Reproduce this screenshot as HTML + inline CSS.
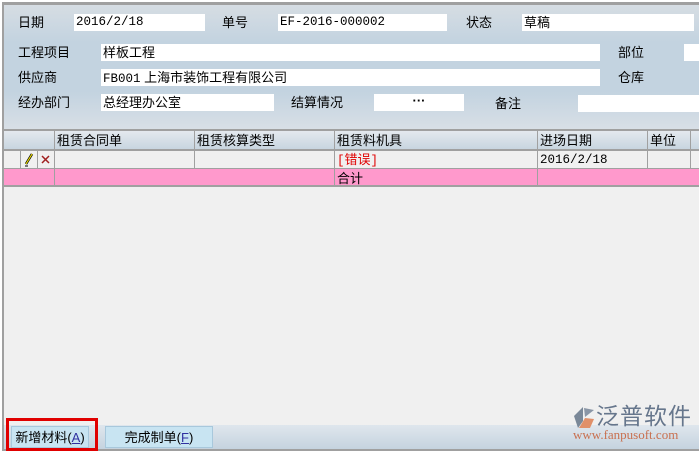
<!DOCTYPE html>
<html><head><meta charset="utf-8"><style>
*{margin:0;padding:0;box-sizing:border-box}
body{width:699px;height:453px;overflow:hidden;background:#fff;font-family:"Liberation Sans","Noto Sans CJK SC",sans-serif;font-size:13px;color:#000;position:relative}
.a{position:absolute}
#frame{left:2px;top:2px;width:697px;height:449px;border-top:3px solid #a0a0a0;border-left:2px solid #a0a0a0;border-bottom:2px solid #a0a0a0;background:#f0f0f0}
#form{left:4px;top:5px;width:695px;height:124px;background:linear-gradient(#d6dde3,#c3d3e0 30%,#c3d3e0 70%,#d8dfe6)}
.l{position:absolute;font-size:13px;line-height:17px}
.i{position:absolute;background:#fff;height:17px;line-height:17px;padding-left:2px;font-size:13px}
.m{font-family:"Liberation Mono","Noto Sans CJK SC",monospace;font-size:12.5px}
.h{position:absolute;top:129px;height:22px;background:linear-gradient(#e4e9ee,#c8d5e0);border-top:2px solid #a0a0a0;border-bottom:2px solid #a0a0a0;line-height:19px}
.v{position:absolute;border-left:1px solid #a0a0a0}
.hl{border-bottom:1px solid #a0a0a0}
</style></head><body>
<div class="a" id="frame"></div>
<div class="a" id="form"></div>
<div class="l" style="left:18px;top:14px">日期</div>
<div class="i m" style="left:74px;top:14px;width:131px">2016/2/18</div>
<div class="l" style="left:222px;top:14px">单号</div>
<div class="i m" style="left:278px;top:14px;width:169px">EF-2016-000002</div>
<div class="l" style="left:466px;top:14px">状态</div>
<div class="i" style="left:522px;top:14px;width:172px">草稿</div>
<div class="l" style="left:18px;top:44px">工程项目</div>
<div class="i" style="left:101px;top:44px;width:499px">样板工程</div>
<div class="l" style="left:618px;top:44px">部位</div>
<div class="i" style="left:684px;top:44px;width:15px"></div>
<div class="l" style="left:18px;top:69px">供应商</div>
<div class="i" style="left:101px;top:69px;width:499px"><span class="m">FB001</span> 上海市装饰工程有限公司</div>
<div class="l" style="left:618px;top:69px">仓库</div>
<div class="l" style="left:18px;top:94px">经办部门</div>
<div class="i" style="left:101px;top:94px;width:173px">总经理办公室</div>
<div class="l" style="left:291px;top:94px">结算情况</div>
<div class="i" style="left:374px;top:94px;width:90px;text-align:center;padding:0;font-weight:bold;line-height:14px">···</div>
<div class="l" style="left:495px;top:95px">备注</div>
<div class="i" style="left:578px;top:95px;width:121px"></div>

<div class="h" style="left:4px;width:695px"></div>
<div class="l" style="left:57px;top:132px">租赁合同单</div>
<div class="l" style="left:197px;top:132px">租赁核算类型</div>
<div class="l" style="left:337px;top:132px">租赁料机具</div>
<div class="l" style="left:540px;top:132px">进场日期</div>
<div class="l" style="left:650px;top:132px">单位</div>
<div class="a hl" style="left:4px;top:151px;width:695px;height:18px;background:#f0f0f0"></div>
<div class="a hl" style="left:4px;top:169px;width:695px;height:18px;background:#ff99cc;border-bottom:2px solid #a0a0a0"></div>
<div class="v" style="left:20px;top:151px;height:18px"></div>
<div class="v" style="left:37px;top:151px;height:18px"></div>
<div class="v" style="left:54px;top:131px;height:56px"></div>
<div class="v" style="left:194px;top:131px;height:38px"></div>
<div class="v" style="left:334px;top:131px;height:56px"></div>
<div class="v" style="left:537px;top:131px;height:56px"></div>
<div class="v" style="left:647px;top:131px;height:38px"></div>
<div class="v" style="left:690px;top:131px;height:38px"></div>
<svg class="a" style="left:23px;top:153px" width="12" height="14"><path d="M9 1 L3 11" stroke="#000" stroke-width="2.5"/><path d="M9 1 L3 11" stroke="#f0e000" stroke-width="1.2"/><path d="M2 13 L5 13" stroke="#000"/></svg>
<svg class="a" style="left:40px;top:154px" width="11" height="11"><path d="M2 2 L9 9 M9 2 L2 9" stroke="#a02020" stroke-width="1.5"/></svg>
<div class="l" style="left:337px;top:151px;color:#e00000"><span class="m">[</span>错误<span class="m">]</span></div>
<div class="l m" style="left:540px;top:152px">2016/2/18</div>
<div class="l" style="left:337px;top:170px">合计</div>

<div class="a" style="left:4px;top:425px;width:695px;height:24px;background:linear-gradient(#dfe6ed,#c5d3df)"></div>
<div class="a" style="left:11px;top:426px;width:78px;height:22px;background:#c8e4f2;border:1px solid #a8c8dc;text-align:center;line-height:21px">新增材料(<u style="color:#3030a0">A</u>)</div>
<div class="a" style="left:105px;top:426px;width:108px;height:22px;background:#c8e4f2;border:1px solid #a8c8dc;text-align:center;line-height:21px">完成制单(<u style="color:#3030a0">F</u>)</div>
<div class="a" style="left:6px;top:418px;width:92px;height:33px;border:3px solid #e00000"></div>
<svg class="a" style="left:570px;top:406px" width="26" height="24"><path d="M13 1 L4 10 L8 22 L13 15 Z" fill="#7a8898"/><path d="M14 2 L24 4 L15 11 Z" fill="#8a96a6"/><path d="M9 22 L15 12 L24 13 L20 22 Z" fill="#e0906a"/></svg>
<div class="a" style="left:596px;top:403px;font-size:23px;line-height:26px;color:#66768c;letter-spacing:1px">泛普软件</div>
<div class="a" style="left:573px;top:428px;font-family:'Liberation Serif',serif;font-size:13px;line-height:13px;color:#c87050">www.fanpusoft.com</div>
</body></html>
